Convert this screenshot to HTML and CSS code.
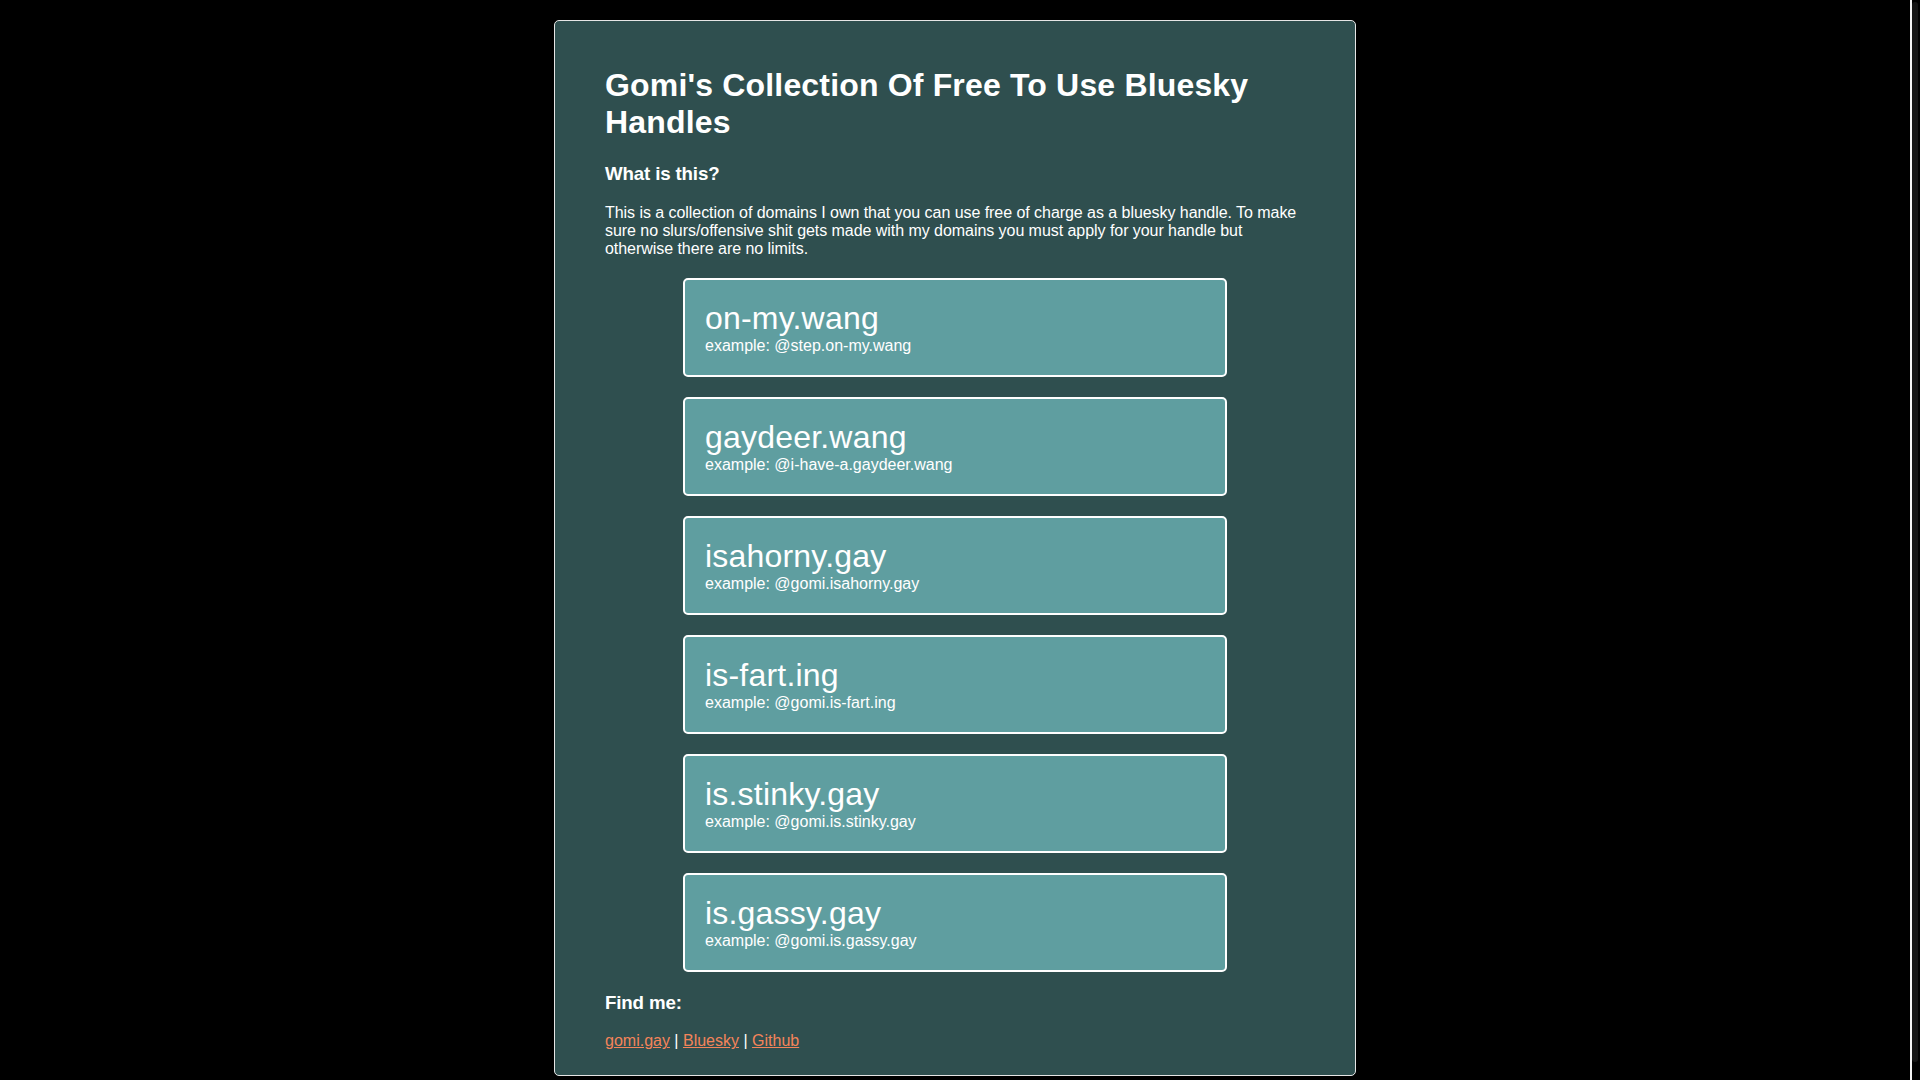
FILE: index.html
```html
<!DOCTYPE html>
<html lang="en">
<head>
<meta charset="utf-8">
<title>Gomi's Collection Of Free To Use Bluesky Handles</title>
<link rel="stylesheet" href="styles.css">
</head>
<body>
<main class="container">
  <h1 class="title">Gomi's Collection Of Free To Use Bluesky Handles</h1>
  <h3 class="section">What is this?</h3>
  <p class="intro">This is a collection of domains I own that you can use free of charge as a bluesky handle. To make sure no slurs/offensive shit gets made with my domains you must apply for your handle but otherwise there are no limits.</p>

  <div class="domain">
    <div class="domain-name">on-my.wang</div>
    <div class="domain-example">example: @step.on-my.wang</div>
  </div>
  <div class="domain">
    <div class="domain-name">gaydeer.wang</div>
    <div class="domain-example">example: @i-have-a.gaydeer.wang</div>
  </div>
  <div class="domain">
    <div class="domain-name">isahorny.gay</div>
    <div class="domain-example">example: @gomi.isahorny.gay</div>
  </div>
  <div class="domain">
    <div class="domain-name">is-fart.ing</div>
    <div class="domain-example">example: @gomi.is-fart.ing</div>
  </div>
  <div class="domain">
    <div class="domain-name">is.stinky.gay</div>
    <div class="domain-example">example: @gomi.is.stinky.gay</div>
  </div>
  <div class="domain">
    <div class="domain-name">is.gassy.gay</div>
    <div class="domain-example">example: @gomi.is.gassy.gay</div>
  </div>

  <h3 class="section">Find me:</h3>
  <p class="links"><a href="#">gomi.gay</a> | <a href="#">Bluesky</a> | <a href="#">Github</a></p>
</main>
<div class="scrollbar" aria-hidden="true"><div class="scrollbar-thumb"></div></div>
</body>
</html>
```
FILE: styles.css
```css
html {
  background: #000;
}
body {
  margin: 0;
  padding: 20px 10px 20px 0;
  background: #000;
  color: #fff;
  font-family: "Liberation Sans", Arial, sans-serif;
  font-size: 16px;
}
.container {
  width: 700px;
  margin: 0 auto;
  padding: 25px 50px 9px;
  background: #2f4f4f;
  border: 1px solid #e6e6e6;
  border-radius: 5px;
  display: flow-root;
}
.title {
  font-size: 32px;
  font-weight: bold;
  letter-spacing: 0.17px;
  margin: 21.44px 0;
}
.section {
  font-size: 18.72px;
  font-weight: bold;
  letter-spacing: -0.15px;
  margin: 18.72px 0;
}
.intro {
  margin: 16px 0;
  letter-spacing: -0.05px;
}
.domain {
  width: 500px;
  margin: 20px auto;
  padding: 20px;
  background: #5f9ea0;
  border: 2px solid #fff;
  border-radius: 5px;
}
.domain-name {
  font-size: 32px;
  letter-spacing: 0.2px;
}
.domain-example {
  font-size: 16px;
}
.links {
  margin: 16px 0;
}
.links a {
  color: #f4845a;
}
/* fake window scrollbar overlaying the right edge */
.scrollbar {
  position: fixed;
  top: 0;
  right: 0;
  bottom: 0;
  width: 10px;
  background: #000;
  border-left: 2px solid #f2f2f2;
  box-sizing: border-box;
}
.scrollbar-thumb {
  margin: 2px 2px 0 0;
  height: 1060px;
  background: #141414;
  border-radius: 3px;
}
```
